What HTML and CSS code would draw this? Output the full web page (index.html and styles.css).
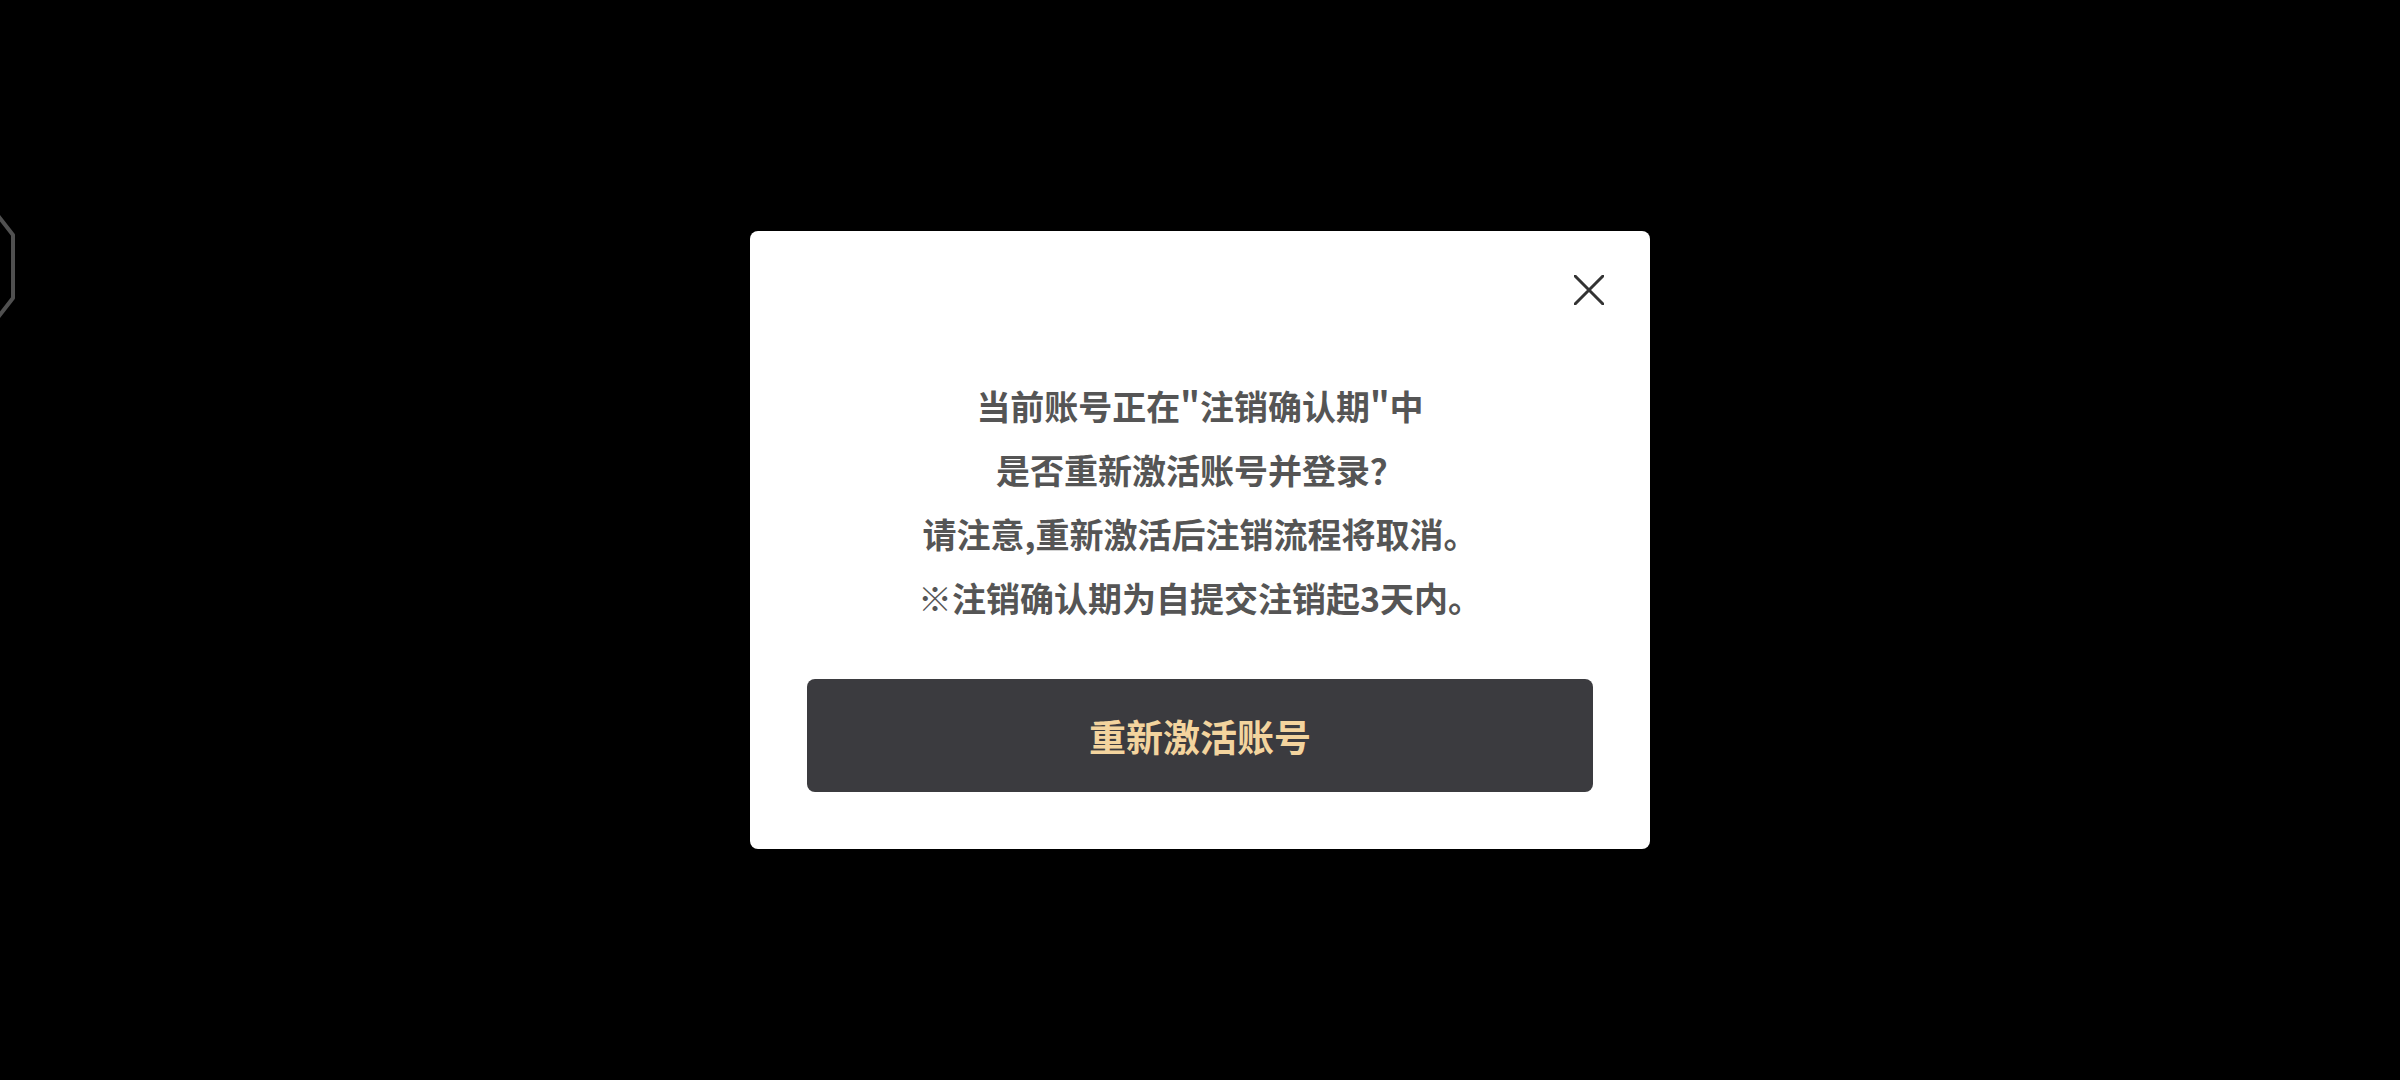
FILE: index.html
```html
<!DOCTYPE html>
<html lang="zh-CN">
<head>
<meta charset="utf-8">
<title>重新激活账号</title>
<link rel="stylesheet" href="styles.css">
</head>
<body>
<div class="screen">
  <svg class="edge-hex" width="30" height="120" viewBox="0 0 30 120">
    <polyline points="-8,-4 13,23 13,86 -8,113" fill="none" stroke="#505050" stroke-width="4" stroke-linejoin="round"/>
  </svg>
  <div class="dialog">
    <button class="close" aria-label="关闭">
      <svg width="30" height="30" viewBox="0 0 30 30">
        <path d="M1 1 L29 29 M29 1 L1 29" stroke="#333333" stroke-width="3" stroke-linecap="round" fill="none"/>
      </svg>
    </button>
    <div class="message">
      <p>当前账号正在"注销确认期"中</p>
      <p>是否重新激活账号并登录？</p>
      <p>请注意,重新激活后注销流程将取消。</p>
      <p>※注销确认期为自提交注销起3天内。</p>
    </div>
    <button class="primary">重新激活账号</button>
  </div>
</div>
</body>
</html>
```

FILE: styles.css
```css
html, body {
  margin: 0;
  padding: 0;
  background: #000000;
}
.screen {
  position: relative;
  width: 2400px;
  height: 1080px;
  display: flex;
  align-items: center;
  justify-content: center;
  overflow: hidden;
  font-family: "Noto Sans CJK SC", "Noto Sans", sans-serif;
}
.edge-hex {
  position: absolute;
  left: 0;
  top: 212px;
}
.dialog {
  position: relative;
  box-sizing: border-box;
  width: 900px;
  height: 618px;
  background: #ffffff;
  border-radius: 8px;
  padding: 143px 57px 57px;
  display: flex;
  flex-direction: column;
}
.close {
  position: absolute;
  top: 44px;
  right: 46px;
  width: 30px;
  height: 30px;
  padding: 0;
  border: 0;
  background: transparent;
  display: flex;
}
.message {
  text-align: center;
  color: #555555;
  font-size: 34px;
  font-weight: 700;
  line-height: 64px;
  margin-bottom: 49px;
}
.message p {
  margin: 0;
}
.primary {
  height: 113px;
  border: 0;
  border-radius: 8px;
  background: #3b3b3f;
  color: #f3d49e;
  font-family: "Noto Sans CJK SC", "Noto Sans", sans-serif;
  font-size: 37px;
  font-weight: 700;
  padding: 0;
}
```
